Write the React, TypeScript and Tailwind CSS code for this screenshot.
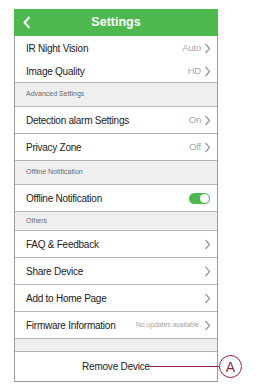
import React from 'react';

const Chevron = () => (
  <svg width="7" height="11" viewBox="0 0 7 11" className="ml-[3px] shrink-0">
    <polyline points="1.5,1 5.5,5.5 1.5,10" fill="none" stroke="#9a9a9a" strokeWidth="1.3" />
  </svg>
);

type RowProps = {
  label: string;
  value?: string;
  small?: boolean;
  chevron?: boolean;
  divider?: boolean;
  height?: string;
  children?: React.ReactNode;
};

const Row = ({ label, value, small, chevron = true, divider = true, height = 'h-[27px]', children }: RowProps) => (
  <div className={`flex items-center justify-between pl-[11px] pr-[6px] bg-white ${height} ${divider ? 'border-b border-[#b5b5b5]' : ''}`}>
    <span className="text-[10px] tracking-[-0.25px] text-[#222]">{label}</span>
    <div className="flex items-center">
      {value && (
        <span className={small ? 'text-[7px] tracking-[-0.1px] text-[#a5a5a5]' : 'text-[9.5px] tracking-[-0.2px] text-[#a8a8a8]'}>{value}</span>
      )}
      {children}
      {chevron && <Chevron />}
    </div>
  </div>
);

const SectionHeader = ({ label, height = 'h-[24px]' }: { label: string; height?: string }) => (
  <div className={`flex items-center pl-[11px] bg-[#efefef] border-b border-[#b5b5b5] ${height}`}>
    <span className="text-[7px] text-[#6a6a6a]">{label}</span>
  </div>
);

export default function App() {
  return (
    <div className="relative w-[278px] h-[391px] bg-white pt-[9px] pl-[14px]" style={{ fontFamily: '"Liberation Sans", Arial, sans-serif' }}>
      <div className="w-[204px]">
        {/* Header */}
        <div className="relative flex items-center justify-center h-[27px] bg-[#4db84e]">
          <svg width="8" height="13" viewBox="0 0 8 13" className="absolute left-[9px] top-[7px]">
            <polyline points="6.5,1 1.5,6.5 6.5,12" fill="none" stroke="white" strokeWidth="2" />
          </svg>
          <span className="text-[12.5px] font-bold text-white">Settings</span>
        </div>

        <div className="border-l border-r border-b border-[#9c9c9c]">
          <Row label="IR Night Vision" value="Auto" divider={false} height="h-[24px]" />
          <Row label="Image Quality" value="HD" height="h-[23px]" />

          <SectionHeader label="Advanced Settings" />
          <Row label="Detection alarm Settings" value="On" />
          <Row label="Privacy Zone" value="Off" />

          <SectionHeader label="Offline Notification" />
          <Row label="Offline Notification" chevron={false}>
            <div className="relative w-[21px] h-[11px] rounded-full bg-[#4cb84f] mr-[1px]">
              <div className="absolute right-[1px] top-[1px] w-[9px] h-[9px] rounded-full bg-white" />
            </div>
          </Row>

          <SectionHeader label="Others" height="h-[19px]" />
          <Row label="FAQ & Feedback" />
          <Row label="Share Device" />
          <Row label="Add to Home Page" />
          <Row label="Firmware Information" value="No updates available." small />

          <div className="h-[13px] bg-[#efefef] border-b border-[#b5b5b5]" />
          <div className="flex items-center justify-center h-[29px] bg-white">
            <span className="text-[10px] tracking-[-0.2px] text-[#222]">Remove Device</span>
          </div>
        </div>
      </div>

      {/* Callout */}
      <div className="absolute left-[149px] top-[366px] w-[70px] h-px bg-[#9b1d4a]" />
      <div className="absolute left-[219px] top-[355px] w-[23px] h-[23px] rounded-full border border-[#9b1d4a] flex items-center justify-center">
        <span className="text-[14px] text-[#9b1d4a] leading-none">A</span>
      </div>
    </div>
  );
}
